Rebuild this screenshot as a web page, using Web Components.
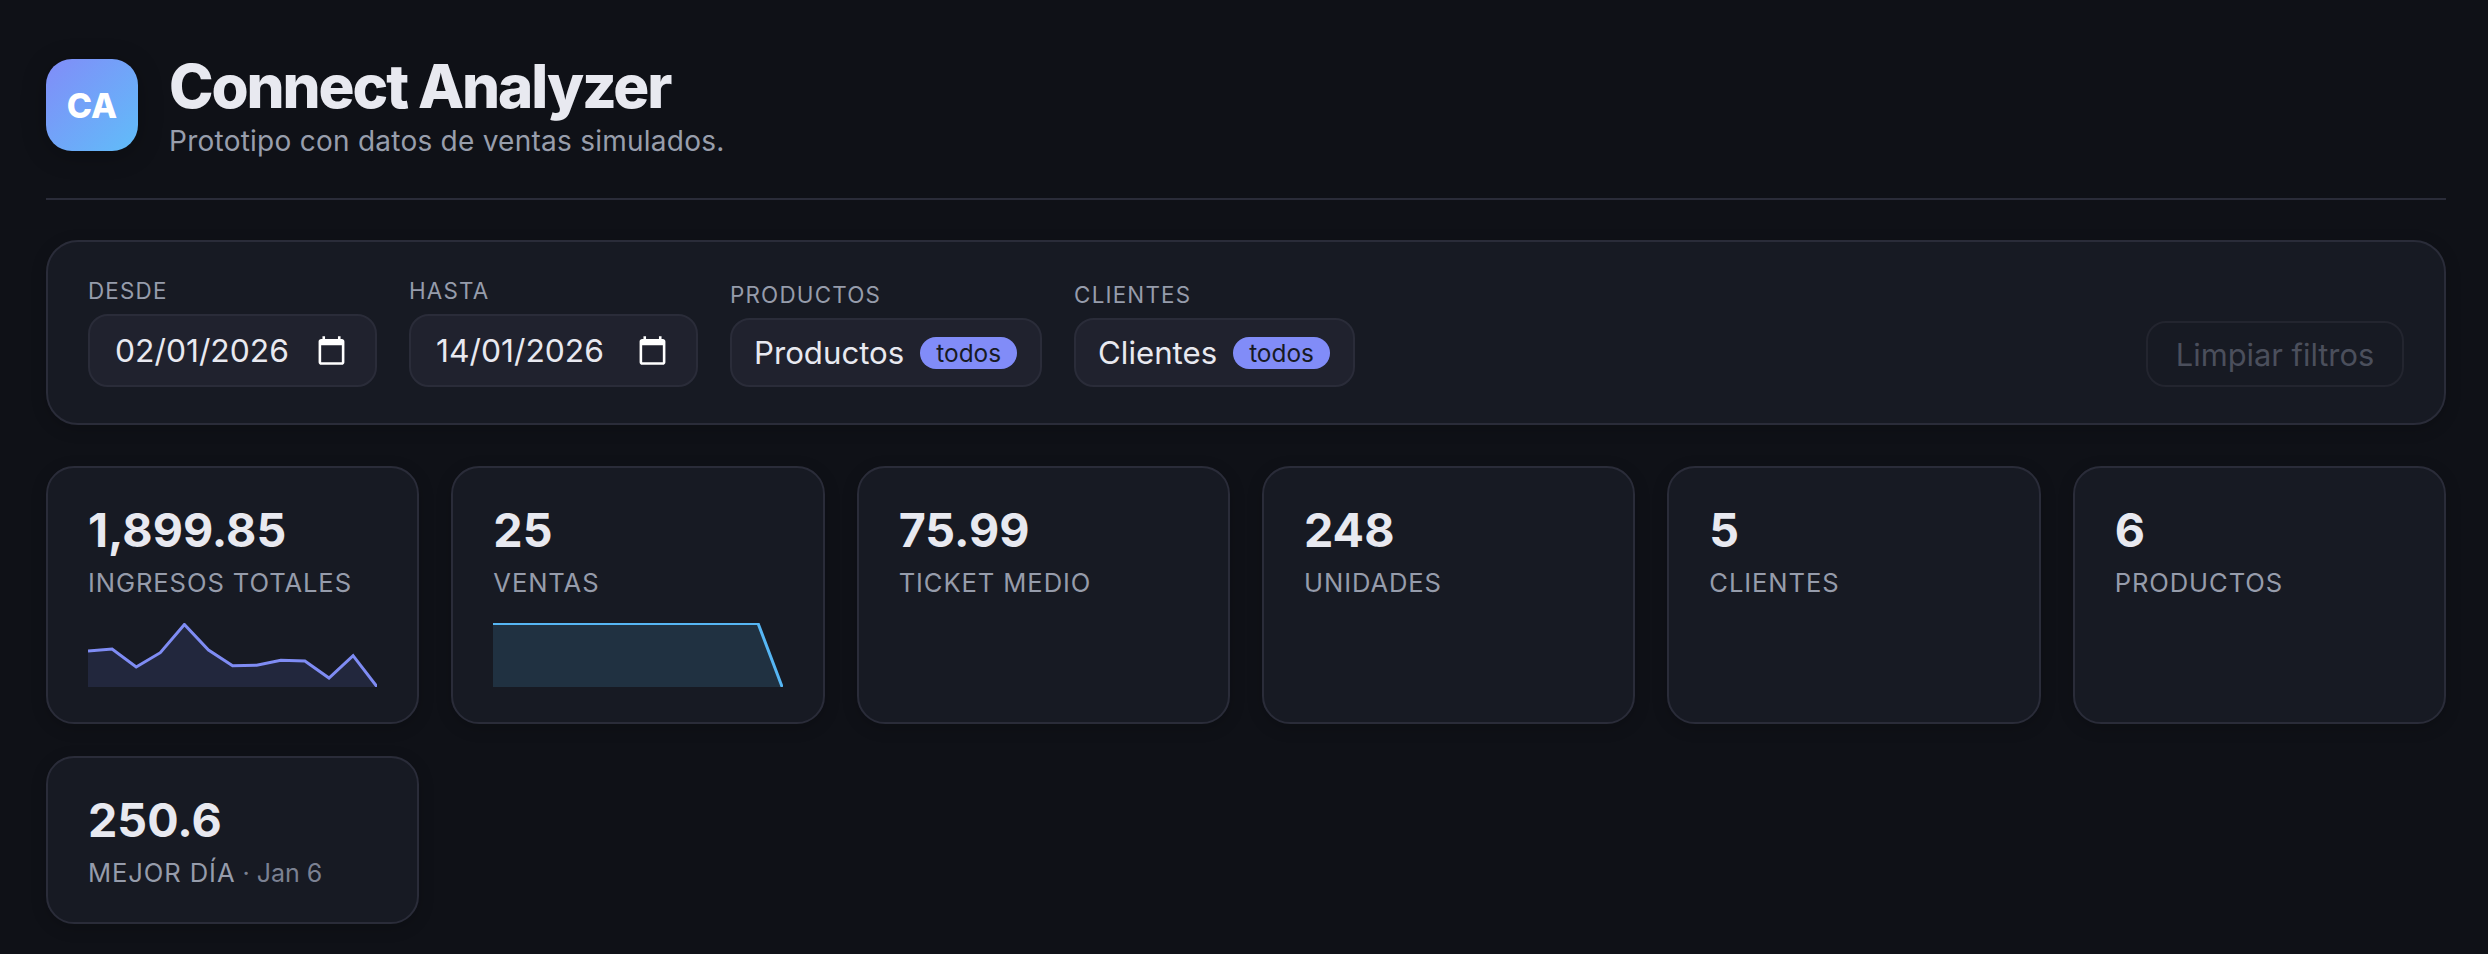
<!DOCTYPE html>
<html lang="es"><head><meta charset="utf-8"><title>Connect Analyzer</title>
<style>
html,body{margin:0;background:#0f1117;color:#e8e9f0;font-family:Inter,"Liberation Sans",sans-serif;}
body{height:954px;overflow:hidden}
</style></head><body>
<ca-app>
  <ca-header title-text="Connect Analyzer" sub="Prototipo con datos de ventas simulados." logo="CA"></ca-header>
  <ca-filters>
    <ca-field label="Desde"><ca-date value="02/01/2026"></ca-date></ca-field>
    <ca-field label="Hasta"><ca-date value="14/01/2026"></ca-date></ca-field>
    <ca-field label="Productos"><ca-multi text="Productos" badge="todos"></ca-multi></ca-field>
    <ca-field label="Clientes"><ca-multi text="Clientes" badge="todos"></ca-multi></ca-field>
    <ca-clear slot="end">Limpiar filtros</ca-clear>
  </ca-filters>
  <ca-grid>
    <ca-stat value="1,899.85" label="Ingresos totales"><ca-spark color="#7f8cf4" fill="rgba(110,130,240,.13)" points="0,28 24.1,26 48.2,44 72.3,29.7 96.4,1.5 120.5,27 144.6,42.7 168.7,42.3 192.8,37.3 216.9,38 241,55 265.1,32.7 289.2,64"></ca-spark></ca-stat>
    <ca-stat value="25" label="Ventas"><ca-spark color="#56b6f4" fill="rgba(86,182,244,.15)" points="0,.5 24.1,.5 48.2,.5 72.3,.5 96.4,.5 120.5,.5 144.6,.5 168.7,.5 192.8,.5 216.9,.5 241,.5 265.1,.5 289.2,64"></ca-spark></ca-stat>
    <ca-stat value="75.99" label="Ticket medio"></ca-stat>
    <ca-stat value="248" label="Unidades"></ca-stat>
    <ca-stat value="5" label="Clientes"></ca-stat>
    <ca-stat value="6" label="Productos"></ca-stat>
    <ca-stat value="250.6" label="Mejor día" note="· Jan 6"></ca-stat>
  </ca-grid>
</ca-app>
<script>
const esc=s=>String(s||'').replace(/&/g,'&amp;').replace(/</g,'&lt;');
class Base extends HTMLElement{
  connectedCallback(){ if(!this.shadowRoot){ this.attachShadow({mode:'open'}).innerHTML=this.render(); } }
}
customElements.define('ca-app',class extends Base{render(){return `<style>
:host{display:block;padding:59px 42px 0 46px;box-sizing:border-box}
</style><slot></slot>`}});
customElements.define('ca-header',class extends Base{render(){return `<style>
:host{display:flex;align-items:flex-start;gap:32px;padding-bottom:47px;border-bottom:2px solid #2a2c39;margin-bottom:40px}
.logo{width:92px;height:92px;border-radius:26px;background:linear-gradient(135deg,#818cf8,#60bdf9);display:flex;align-items:center;justify-content:center;color:#fff;font-weight:800;font-size:34px;box-shadow:0 4px 24px rgba(0,0,0,.25)}
.txt{display:flex;flex-direction:column;margin-left:-1px}
h1{margin:0;font-size:60px;line-height:54px;font-weight:800;letter-spacing:-2.100px;color:#e8e9f0}
p{margin:18px 0 0;font-size:28px;line-height:20px;color:#989eac;letter-spacing:.25px}
</style><div class="logo">${esc(this.getAttribute('logo'))}</div><div class="txt"><h1>${esc(this.getAttribute('title-text'))}</h1><p>${esc(this.getAttribute('sub'))}</p></div>`}});
customElements.define('ca-filters',class extends Base{render(){return `<style>
:host{display:flex;align-items:flex-end;gap:32px;background:#171a23;border:2px solid #2a2c39;border-radius:32px;padding:36px 40px;margin-bottom:41px;box-shadow:0 4px 16px rgba(0,0,0,.18)}
.end{margin-left:auto;display:flex}
</style><slot></slot><div class="end"><slot name="end"></slot></div>`}});
customElements.define('ca-field',class extends Base{render(){return `<style>
:host{display:flex;flex-direction:column;gap:10px}
.l{font-size:22.400px;line-height:26px;letter-spacing:1.200px;text-transform:uppercase;color:#969cab}
</style><div class="l">${esc(this.getAttribute('label'))}</div><slot></slot>`}});
customElements.define('ca-date',class extends Base{render(){return `<style>
:host{display:flex;align-items:center;justify-content:space-between;box-sizing:border-box;width:289px;height:73px;padding:0 28px 0 25px;background:#20222e;border:2px solid #2a2c39;border-radius:20px;font-size:31.800px;color:#e8e9f0}
svg{width:31px;height:31px;fill:#fff;display:block}
</style><span>${esc(this.getAttribute('value'))}</span><svg viewBox="0 0 24 24"><path d="M20 3h-1V1h-2v2H7V1H5v2H4c-1.100 0-2 .9-2 2v16c0 1.100.9 2 2 2h16c1.100 0 2-.9 2-2V5c0-1.100-.9-2-2-2zm0 18H4V8h16v13z"/></svg>`}});
customElements.define('ca-multi',class extends Base{render(){return `<style>
:host{display:flex;align-items:center;gap:16px;box-sizing:border-box;height:69px;padding:0 23px 0 22px;background:#20222e;border:2px solid #2a2c39;border-radius:20px;font-size:31.200px;color:#e8e9f0}
b{font-weight:400;font-size:24.400px;line-height:32px;height:32px;padding:0 16px;border-radius:999px;background:#818cf8;color:#171a23}
</style><span>${esc(this.getAttribute('text'))}</span><b>${esc(this.getAttribute('badge'))}</b>`}});
customElements.define('ca-clear',class extends Base{render(){return `<style>
:host{display:flex;align-items:center;justify-content:center;box-sizing:border-box;width:258px;height:66px;border:2px solid #23252f;border-radius:20px;font-size:30.800px;color:#4b4f5c}
</style><slot></slot>`}});
customElements.define('ca-grid',class extends Base{render(){return `<style>
:host{display:grid;grid-template-columns:repeat(6,1fr);gap:32px}
</style><slot></slot>`}});
customElements.define('ca-stat',class extends Base{render(){const n=this.getAttribute('note');return `<style>
:host{display:block;box-sizing:border-box;background:#171a23;border:2px solid #2a2c39;border-radius:28px;padding:35px 40px 33px;box-shadow:0 4px 16px rgba(0,0,0,.18)}
.v{font-size:46.600px;line-height:54px;font-weight:750;color:#e8e9f0}
.l{margin-top:10px;font-size:25.600px;line-height:32px;letter-spacing:.9px;color:#969cab}
.u{text-transform:uppercase}
.n{letter-spacing:0;color:#7b8192;font-size:25px}
::slotted(ca-spark){margin:24px 0 2px}
</style><div class="v">${esc(this.getAttribute('value'))}</div><div class="l"><span class="u">${esc(this.getAttribute('label'))}</span>${n?`<span class="n"> ${esc(n)}</span>`:''}</div><slot></slot>`}});
customElements.define('ca-spark',class extends Base{render(){const p=this.getAttribute('points');return `<style>
:host{display:block;height:64px}
svg{display:block;width:289.200px;height:64px;overflow:hidden}
</style><svg viewBox="0 0 289.200 64" preserveAspectRatio="none"><polygon points="0,64 ${p} 289.200,64" fill="${this.getAttribute('fill')}"/><polyline points="${p}" fill="none" stroke="${this.getAttribute('color')}" stroke-width="3"/></svg>`}});
</script>
</body></html>
